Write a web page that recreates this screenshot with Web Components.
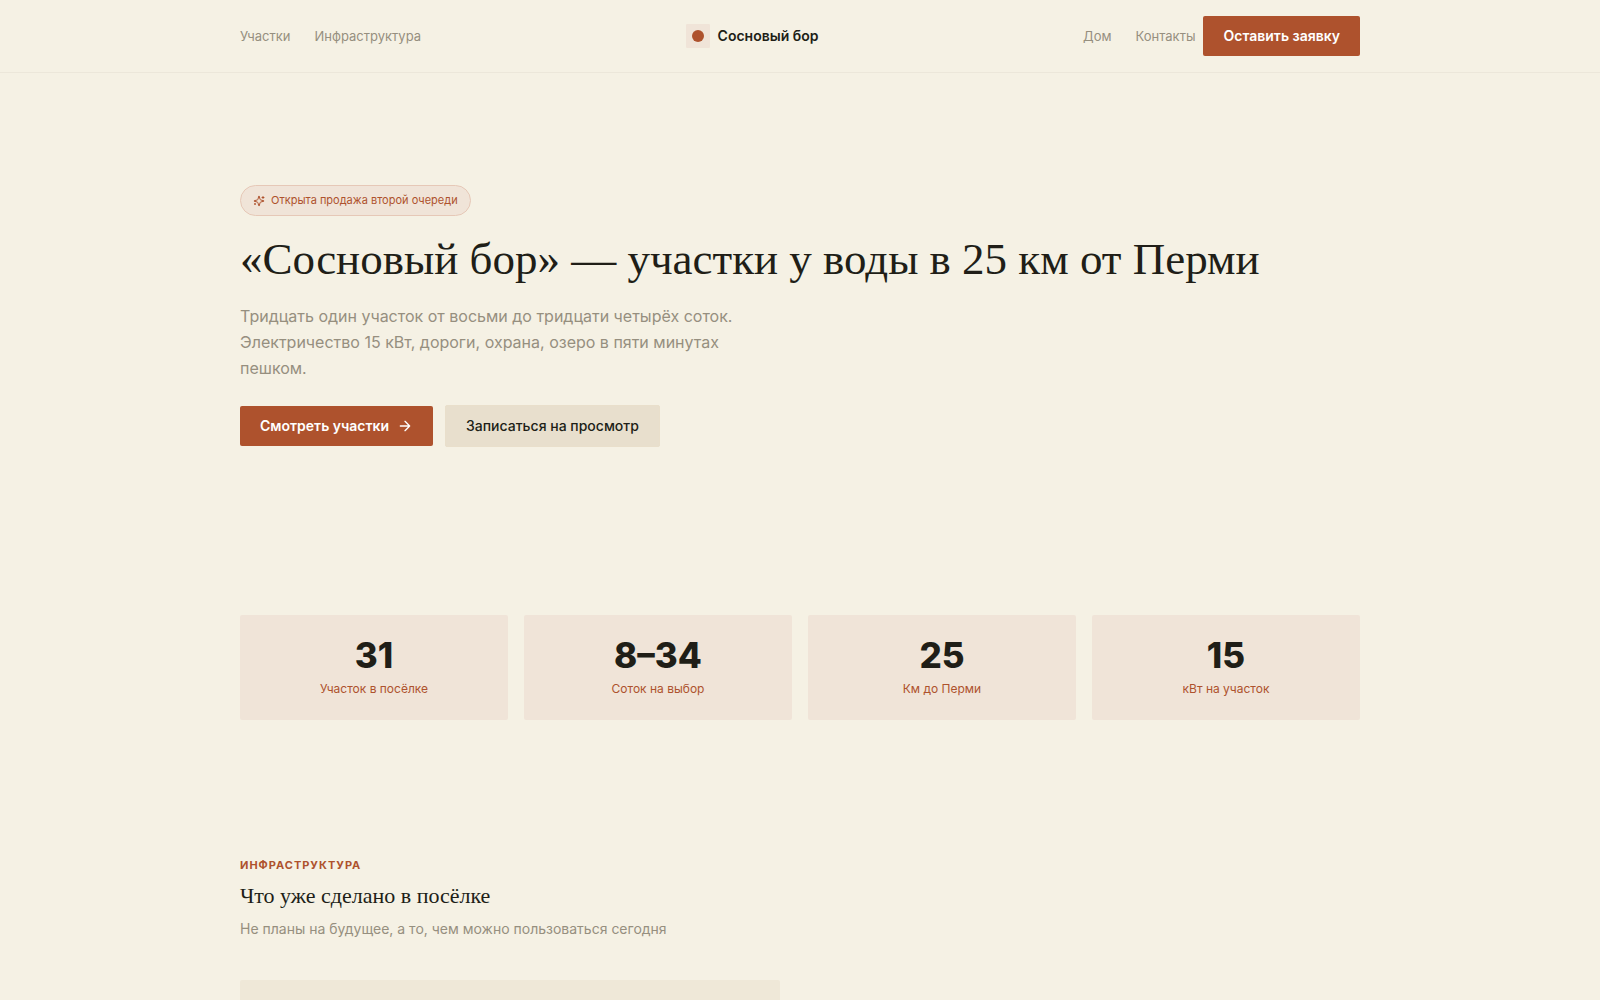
<!DOCTYPE html>
<html lang="ru">
<head>
<meta charset="UTF-8">
<meta name="viewport" content="width=device-width, initial-scale=1">
<title>Сосновый бор</title>
<style>
  :root {
    --bg: #f5f1e4;
    --ink: #201e17;
    --muted: #968f7f;
    --accent: #ae522d;
    --tint: #f0e4d8;
    --sand: #e8dfcd;
    --line: #ece7da;
    --panel: #efe8d8;
    --serif: "Liberation Serif", serif;
  }

  body {
    margin: 0;
    background: var(--bg);
    color: var(--ink);
    font-family: Inter, sans-serif;
    font-size: 14px;
    line-height: 20px;
  }
</style>
</head>
<body>
<site-header>
  <nav-link slot="left" href="#plots">Участки</nav-link>
  <nav-link slot="left" href="#infra">Инфраструктура</nav-link>
  <site-logo>Сосновый бор</site-logo>
  <nav-link slot="right" href="#house">Дом</nav-link>
  <nav-link slot="right" href="#contacts">Контакты</nav-link>
  <ui-button slot="action">Оставить заявку</ui-button>
</site-header>

<main>
  <hero-section>
    <promo-badge slot="badge">Открыта продажа второй очереди</promo-badge>
    <span slot="title">«Сосновый бор» — участки у воды в 25 км от Перми</span>
    <span slot="text">Тридцать один участок от восьми до тридцати четырёх соток. Электричество 15 кВт, дороги, охрана, озеро в пяти минутах пешком.</span>
    <ui-button slot="actions" arrow>Смотреть участки</ui-button>
    <ui-button slot="actions" variant="soft">Записаться на просмотр</ui-button>
  </hero-section>

  <stat-grid>
    <stat-card value="31">Участок в посёлке</stat-card>
    <stat-card value="8–34">Соток на выбор</stat-card>
    <stat-card value="25">Км до Перми</stat-card>
    <stat-card value="15">кВт на участок</stat-card>
  </stat-grid>

  <info-section id="infra">
    <span slot="eyebrow">Инфраструктура</span>
    <span slot="title">Что уже сделано в посёлке</span>
    <span slot="text">Не планы на будущее, а то, чем можно пользоваться сегодня</span>
    <info-card></info-card>
  </info-section>
</main>

<script>
// shadow root from a html string
function attach(el, html) {
  const template = document.createElement("template");
  template.innerHTML = html;
  el.attachShadow({ mode: "open" });
  el.shadowRoot.appendChild(template.content.cloneNode(true));
}

class SiteHeader extends HTMLElement {
  constructor() {
    super();
    attach(this, `
<style>
  :host {
    display: block;
    border-bottom: 1px solid var(--line);
  }

  header {
    display: flex;
    align-items: center;
    justify-content: space-between;
    max-width: 1120px;
    margin: 0 auto;
    padding: 16px 24px;
  }

  nav, .right {
    display: flex;
    align-items: center;
  }

  nav {
    gap: 24px;
  }

  .right {
    gap: 8px;
  }
</style>
<header>
  <nav aria-label="Посёлок"><slot name="left"></slot></nav>
  <slot></slot>
  <div class="right">
    <nav aria-label="Информация"><slot name="right"></slot></nav>
    <slot name="action"></slot>
  </div>
</header>
`);
  }
}

class NavLink extends HTMLElement {
  constructor() {
    super();
    attach(this, `
<style>
  :host {
    display: block;
  }

  a {
    color: var(--muted);
    font-size: 13px;
    text-decoration: none;
  }

  a:hover {
    color: var(--ink);
  }
</style>
<a><slot></slot></a>
`);
  }

  connectedCallback() {
    this.shadowRoot.querySelector("a").href = this.getAttribute("href");
  }
}

class SiteLogo extends HTMLElement {
  constructor() {
    super();
    attach(this, `
<style>
  :host {
    display: block;
  }

  a {
    display: flex;
    align-items: center;
    gap: 8px;
    color: inherit;
    font-size: 14px;
    font-weight: 600;
    text-decoration: none;
  }

  .mark {
    display: grid;
    place-items: center;
    width: 24px;
    height: 24px;
    border-radius: 1px;
    background: var(--tint);
  }

  .mark::before {
    content: "";
    width: 12px;
    height: 12px;
    border-radius: 50%;
    background: var(--accent);
  }
</style>
<a href="#"><span class="mark"></span><slot></slot></a>
`);
  }
}

class UiButton extends HTMLElement {
  constructor() {
    super();
    attach(this, `
<style>
  :host {
    display: block;
  }

  button {
    display: flex;
    align-items: center;
    gap: 8px;
    margin: 0;
    padding: 10px 20px;
    border: 0;
    border-radius: 2px;
    background: var(--accent);
    color: #fff;
    font: inherit;
    font-size: 14px;
    font-weight: 600;
    white-space: nowrap;
    cursor: pointer;
  }

  :host([variant="soft"]) button {
    border: 1px solid #e9dfcb;
    background: var(--sand);
    color: var(--ink);
    font-weight: 500;
  }

  svg {
    display: none;
  }

  :host([arrow]) svg {
    display: block;
  }
</style>
<button type="button">
  <slot></slot>
  <svg width="16" height="16" viewBox="0 0 24 24" fill="none" stroke="currentColor" stroke-width="2" stroke-linecap="round" stroke-linejoin="round" aria-hidden="true">
    <path d="M5 12h14M12 5l7 7-7 7"/>
  </svg>
</button>
`);
  }
}

class PromoBadge extends HTMLElement {
  constructor() {
    super();
    attach(this, `
<style>
  :host {
    display: flex;
    align-items: center;
    gap: 6px;
    width: fit-content;
    padding: 6px 12px;
    border: 1px solid #e6c8b7;
    border-radius: 16px;
    background: var(--tint);
    color: var(--accent);
    font-size: 11px;
    line-height: 17px;
  }
</style>
<svg width="12" height="12" viewBox="0 0 24 24" fill="none" stroke="currentColor" stroke-width="2" stroke-linecap="round" stroke-linejoin="round" aria-hidden="true">
  <path d="M9.937 15.5A2 2 0 0 0 8.5 14.063l-6.135-1.582a.5.5 0 0 1 0-.962L8.5 9.936A2 2 0 0 0 9.937 8.5l1.582-6.135a.5.5 0 0 1 .963 0L14.063 8.5A2 2 0 0 0 15.5 9.937l6.135 1.581a.5.5 0 0 1 0 .964L15.5 14.063a2 2 0 0 0-1.437 1.437l-1.582 6.135a.5.5 0 0 1-.963 0z"/>
  <path d="M20 3v4M22 5h-4M4 17v2M5 18H3"/>
</svg>
<slot></slot>
`);
  }
}

class HeroSection extends HTMLElement {
  constructor() {
    super();
    attach(this, `
<style>
  :host {
    display: block;
    max-width: 1120px;
    margin: 0 auto;
    padding: 112px 24px;
  }

  h1 {
    margin: 16px 0;
    font-family: var(--serif);
    font-size: 45px;
    font-weight: 400;
    line-height: 55px;
  }

  p {
    max-width: 512px;
    margin: 0 0 24px;
    color: var(--muted);
    font-size: 16px;
    line-height: 26px;
  }

  .actions {
    display: flex;
    align-items: center;
    gap: 12px;
  }
</style>
<section>
  <slot name="badge"></slot>
  <h1><slot name="title"></slot></h1>
  <p><slot name="text"></slot></p>
  <div class="actions"><slot name="actions"></slot></div>
</section>
`);
  }
}

class StatGrid extends HTMLElement {
  constructor() {
    super();
    attach(this, `
<style>
  :host {
    display: grid;
    grid-template-columns: repeat(4, 1fr);
    gap: 16px;
    max-width: 1120px;
    margin: 0 auto;
    padding: 56px 24px;
  }
</style>
<slot></slot>
`);
  }
}

class StatCard extends HTMLElement {
  constructor() {
    super();
    attach(this, `
<style>
  :host {
    display: block;
    padding: 24px 16px;
    border-radius: 2px;
    background: var(--tint);
    text-align: center;
  }

  .value {
    font-size: 35px;
    font-weight: 800;
    line-height: 32px;
  }

  .label {
    margin-top: 10px;
    color: var(--accent);
    font-size: 12px;
    line-height: 15px;
  }
</style>
<div class="value"></div>
<div class="label"><slot></slot></div>
`);
  }

  connectedCallback() {
    this.shadowRoot.querySelector(".value").textContent = this.getAttribute("value");
  }
}

class InfoSection extends HTMLElement {
  constructor() {
    super();
    attach(this, `
<style>
  :host {
    display: block;
    max-width: 1120px;
    margin: 0 auto;
    padding: 80px 24px;
  }

  .eyebrow {
    color: var(--accent);
    font-size: 11px;
    font-weight: 700;
    letter-spacing: 1px;
    line-height: 18px;
    text-transform: uppercase;
  }

  h2 {
    margin: 8px 0;
    font-family: var(--serif);
    font-size: 22px;
    font-weight: 400;
    line-height: 28px;
  }

  p {
    margin: 0;
    color: var(--muted);
    font-size: 14px;
    line-height: 22px;
  }

  .grid {
    display: grid;
    grid-template-columns: 1fr 1fr;
    gap: 40px;
    margin-top: 40px;
  }
</style>
<section>
  <div class="eyebrow"><slot name="eyebrow"></slot></div>
  <h2><slot name="title"></slot></h2>
  <p><slot name="text"></slot></p>
  <div class="grid"><slot></slot></div>
</section>
`);
  }
}

class InfoCard extends HTMLElement {
  constructor() {
    super();
    attach(this, `
<style>
  :host {
    display: block;
    min-height: 200px;
    border-radius: 2px;
    background: var(--panel);
  }
</style>
<slot></slot>
`);
  }
}

customElements.define("site-header", SiteHeader);
customElements.define("nav-link", NavLink);
customElements.define("site-logo", SiteLogo);
customElements.define("ui-button", UiButton);
customElements.define("promo-badge", PromoBadge);
customElements.define("hero-section", HeroSection);
customElements.define("stat-grid", StatGrid);
customElements.define("stat-card", StatCard);
customElements.define("info-section", InfoSection);
customElements.define("info-card", InfoCard);
</script>
</body>
</html>
